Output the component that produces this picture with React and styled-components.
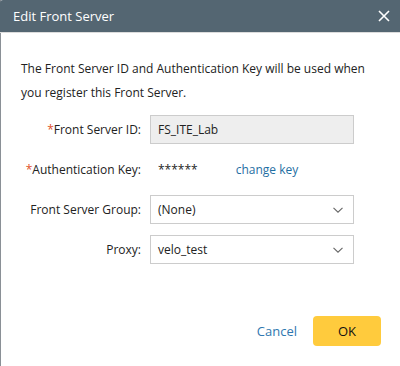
import React from "react";
import styled, { createGlobalStyle } from "styled-components";

const Global = createGlobalStyle`
  html, body { margin: 0; padding: 0; background: #ffffff; }
  body { font-family: "Open Sans", "Noto Sans", sans-serif; }
`;

const Dialog = styled.div`
  width: 400px;
  height: 366px;
  box-sizing: border-box;
  border-left: 1px solid #8a9096;
  background: #fff;
  display: flex;
  flex-direction: column;
`;

const Header = styled.div`
  height: 32px;
  background: #546672;
  border-bottom: 1px solid #dcdcdc;
  border-top-left-radius: 3px;
  margin-left: -1px;
  display: flex;
  align-items: center;
  justify-content: space-between;
  padding: 0 9px 0 13px;
  color: #fff;
  font-size: 13px;
`;

const Close = styled.button`
  background: none;
  border: 0;
  padding: 0;
  width: 14px;
  height: 14px;
  display: flex;
  align-items: center;
  justify-content: center;
  cursor: pointer;
`;

const Body = styled.div`
  flex: 1;
  padding: 24px 0 0 20px;
  font-size: 12px;
  color: #222;
`;

const Intro = styled.p`
  margin: 0 0 10px;
  line-height: 24px;
  width: 365px;
`;

const Rows = styled.div`
  display: flex;
  flex-direction: column;
  gap: 11px;
`;

const Row = styled.div`
  display: grid;
  grid-template-columns: 120px 204px;
  column-gap: 9px;
  align-items: center;
  height: 29px;
`;

const Label = styled.label`
  text-align: right;
  white-space: nowrap;
`;

const Star = styled.span`
  color: #e0502a;
`;

const Field = styled.div`
  box-sizing: border-box;
  height: 29px;
  border: 1px solid #cccccc;
  background: ${(p) => (p.$disabled ? "#eeeeee" : "#fff")};
  display: flex;
  align-items: center;
  justify-content: space-between;
  padding: 0 10px 0 7px;
`;

const KeyLine = styled.div`
  display: flex;
  align-items: center;
  padding-left: 8px;
  gap: 38px;
`;

const Link = styled.a`
  color: #1f6fa3;
  text-decoration: none;
`;

const Footer = styled.div`
  display: flex;
  justify-content: flex-end;
  align-items: center;
  gap: 16px;
  padding: 0 19px 20px 0;
`;

const CancelBtn = styled.button`
  background: none;
  border: 0;
  padding: 0;
  font: inherit;
  font-size: 13px;
  color: #2f78b0;
`;

const OkBtn = styled.button`
  width: 68px;
  height: 30px;
  border: 0;
  border-radius: 4px;
  background: #ffcb3d;
  font: inherit;
  font-size: 13px;
  color: #111;
`;

const Chevron = () => (
  <svg width="10" height="6" viewBox="0 0 10 6">
    <path d="M0.5 0.8 L5 5.2 L9.5 0.8" fill="none" stroke="#666" strokeWidth="1.1" />
  </svg>
);

export default function App() {
  return (
    <>
      <Global />
      <Dialog>
        <Header>
          <span>Edit Front Server</span>
          <Close aria-label="close">
            <svg width="12" height="12" viewBox="0 0 12 12">
              <path d="M1 1 L11 11 M11 1 L1 11" stroke="#fff" strokeWidth="1.6" />
            </svg>
          </Close>
        </Header>
        <Body>
          <Intro>
            The Front Server ID and Authentication Key will be used when you
            register this Front Server.
          </Intro>
          <Rows>
            <Row>
              <Label><Star>*</Star>Front Server ID:</Label>
              <Field $disabled>FS_ITE_Lab</Field>
            </Row>
            <Row>
              <Label><Star>*</Star>Authentication Key:</Label>
              <KeyLine>
                <span>******</span>
                <Link href="#">change key</Link>
              </KeyLine>
            </Row>
            <Row>
              <Label>Front Server Group:</Label>
              <Field>
                <span>(None)</span>
                <Chevron />
              </Field>
            </Row>
            <Row>
              <Label>Proxy:</Label>
              <Field>
                <span>velo_test</span>
                <Chevron />
              </Field>
            </Row>
          </Rows>
        </Body>
        <Footer>
          <CancelBtn>Cancel</CancelBtn>
          <OkBtn>OK</OkBtn>
        </Footer>
      </Dialog>
    </>
  );
}
